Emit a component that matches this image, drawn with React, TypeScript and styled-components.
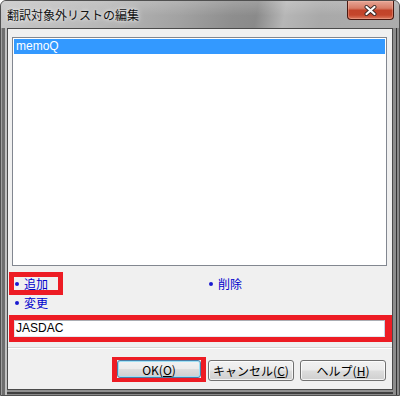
import React from "react";
import styled, { createGlobalStyle } from "styled-components";

const GlobalStyle = createGlobalStyle`
  html, body { margin: 0; padding: 0; background: #ffffff; }
  body {
    font-family: "Noto Sans CJK JP", "Liberation Sans", sans-serif;
    font-size: 12px;
  }
  * { box-sizing: border-box; }
`;

const Window = styled.div`
  width: 400px;
  height: 396px;
  display: flex;
  flex-direction: column;
  border: 1px solid #505050;
  border-radius: 6px 6px 0 0;
  overflow: hidden;
  background-color: #8c8c8c;
`;

const TitleBar = styled.div`
  height: 27px;
  flex: none;
  display: flex;
  align-items: flex-start;
  padding: 0 5px 0 6px;
  background:
    linear-gradient(to bottom, rgba(255, 255, 255, 0.18), rgba(255, 255, 255, 0) 55%),
    linear-gradient(
      100deg,
      #c6c6c6 0%,
      #b8b8b8 25%,
      #a2a2a2 45%,
      #8e8e8e 58%,
      #8a8a8a 64%,
      #b6b6b6 71%,
      #a9a9a9 80%,
      #acacac 100%
    );
`;

const Title = styled.div`
  line-height: 27px;
  font-size: 12px;
  color: #111;
  text-shadow: 0 0 6px rgba(255, 255, 255, 0.9), 0 0 3px rgba(255, 255, 255, 0.6);
  white-space: nowrap;
`;

const CloseButton = styled.div`
  margin-left: auto;
  width: 47px;
  height: 19px;
  display: flex;
  align-items: center;
  justify-content: center;
  border: 1px solid #4a1810;
  border-top: none;
  border-radius: 0 0 4px 4px;
  background: linear-gradient(
    to bottom,
    #e6a596 0%,
    #d77c66 40%,
    #c2432a 52%,
    #c4462c 78%,
    #dc7a60 100%
  );
  box-shadow: inset 0 0 0 1px rgba(255, 200, 180, 0.35);
`;

const FrameBody = styled.div`
  flex: 1;
  display: flex;
  padding: 0 6px 5px 6px;
  background:
    linear-gradient(to right, #9e9e9e 0 1px, #6e6e6e 1px 4px, #c0c0c0 4px 6px, transparent 6px),
    linear-gradient(to left, #8a8a8a 0 2px, #333333 2px 3px, #8c8c8c 3px 6px, transparent 6px),
    linear-gradient(to top, #8a8a8a 0 1px, #404040 1px 3px, #909090 3px 5px, transparent 5px),
    #8e8e8e;
`;

const Client = styled.div`
  flex: 1;
  display: flex;
  flex-direction: column;
  border: 1px solid #4a4a4a;
  background: #f0f0f0;
  padding-top: 8px;
`;

const ListBox = styled.div`
  margin-left: 4px;
  width: 375px;
  height: 229px;
  flex: none;
  border: 1px solid #828790;
  background: #ffffff;
  padding: 1px;
`;

const ListRow = styled.div<{ $selected?: boolean }>`
  height: 15px;
  line-height: 15px;
  padding-left: 2px;
  font-family: "Liberation Sans", "Noto Sans CJK JP", sans-serif;
  font-size: 12px;
  background: ${(p) => (p.$selected ? "#3399ff" : "transparent")};
  color: ${(p) => (p.$selected ? "#ffffff" : "#000000")};
`;

const RedBox = styled.div<{ $bw: string }>`
  border-style: solid;
  border-color: #ed1c24;
  border-width: ${(p) => p.$bw};
`;

const LinkGrid = styled.div`
  margin-top: 6px;
  display: grid;
  grid-template-columns: 201px auto;
  grid-template-rows: 23px 15px;
  align-items: center;
  justify-items: start;
`;

const LinkMark = styled(RedBox)`
  margin-left: 1px;
  width: 54px;
  height: 23px;
  display: flex;
  align-items: center;
`;

const LinkItem = styled.div<{ $indent?: number }>`
  display: inline-flex;
  align-items: center;
  gap: 5px;
  margin-left: ${(p) => p.$indent ?? 0}px;
  color: #0000cc;
  font-size: 12px;
  line-height: 14px;
  cursor: pointer;
`;

const Bullet = styled.span`
  width: 4px;
  height: 4px;
  border-radius: 50%;
  background: #1a1ad0;
  flex: none;
`;

const FieldMark = styled(RedBox)`
  margin-top: 5px;
  margin-left: 1px;
  width: 383px;
  height: 27px;
  flex: none;
`;

const EditField = styled.div`
  width: 100%;
  height: 100%;
  background: #ffffff;
  border: 1px solid #e2e3ea;
  border-top-color: #abadb3;
  border-bottom-color: #e3e9ef;
  border-right-color: #c2d4e4;
  padding-left: 1px;
  font-family: "Liberation Sans", sans-serif;
  font-size: 12px;
  line-height: 15px;
  color: #000;
`;

const Separator = styled.div`
  margin-top: 5px;
  height: 2px;
  flex: none;
  border-top: 1px solid #d6d6d6;
  border-bottom: 1px solid #ffffff;
`;

const ButtonRow = styled.div`
  margin-top: 8px;
  height: 25px;
  flex: none;
  display: flex;
  justify-content: flex-end;
  align-items: flex-start;
  padding-right: 6px;
`;

const OkMark = styled(RedBox)`
  display: flex;
`;

const Button = styled.div<{ $w: number; $h?: number; $default?: boolean; $ml?: number; $mt?: number }>`
  width: ${(p) => p.$w}px;
  height: ${(p) => p.$h ?? 21}px;
  margin-left: ${(p) => p.$ml ?? 0}px;
  margin-top: ${(p) => p.$mt ?? 0}px;
  display: flex;
  align-items: center;
  justify-content: center;
  border: 1px solid ${(p) => (p.$default ? "#4a7fa8" : "#707070")};
  border-radius: 3px;
  background: linear-gradient(
    to bottom,
    #f2f2f2 0%,
    #ebebeb 48%,
    #dddddd 52%,
    #cfcfcf 100%
  );
  box-shadow: inset 0 0 0 1px ${(p) => (p.$default ? "#9fe0f5" : "rgba(255,255,255,0.75)")};
  font-size: 12px;
  color: #000;
  white-space: nowrap;
`;

const Mnemonic = styled.span`
  text-decoration: underline;
`;

const CloseGlyph = () => (
  <svg width="13" height="11" viewBox="0 0 13 11">
    <path d="M2.5 2 L10.5 9 M10.5 2 L2.5 9" stroke="#3a2a28" strokeWidth="4" strokeLinecap="round" fill="none" />
    <path d="M2.5 2 L10.5 9 M10.5 2 L2.5 9" stroke="#ffffff" strokeWidth="2.2" strokeLinecap="round" fill="none" />
  </svg>
);

export default function App() {
  return (
    <>
      <GlobalStyle />
      <Window>
        <TitleBar>
          <Title>翻訳対象外リストの編集</Title>
          <CloseButton>
            <CloseGlyph />
          </CloseButton>
        </TitleBar>
        <FrameBody>
          <Client>
            <ListBox>
              <ListRow $selected>memoQ</ListRow>
            </ListBox>
            <LinkGrid>
              <LinkMark $bw="5px">
                <LinkItem $indent={1}>
                  <Bullet />
                  追加
                </LinkItem>
              </LinkMark>
              <LinkItem>
                <Bullet />
                削除
              </LinkItem>
              <LinkItem $indent={7}>
                <Bullet />
                変更
              </LinkItem>
            </LinkGrid>
            <FieldMark $bw="5px 7px 5px 5px">
              <EditField>JASDAC</EditField>
            </FieldMark>
            <Separator />
            <ButtonRow>
              <OkMark $bw="3px 5px 4px 5px">
                <Button $w={84} $h={18} $default>
                  OK(<Mnemonic>O</Mnemonic>)
                </Button>
              </OkMark>
              <Button $w={86} $ml={2} $mt={3}>
                キャンセル(<Mnemonic>C</Mnemonic>)
              </Button>
              <Button $w={86} $ml={6} $mt={3}>
                ヘルプ(<Mnemonic>H</Mnemonic>)
              </Button>
            </ButtonRow>
          </Client>
        </FrameBody>
      </Window>
    </>
  );
}
